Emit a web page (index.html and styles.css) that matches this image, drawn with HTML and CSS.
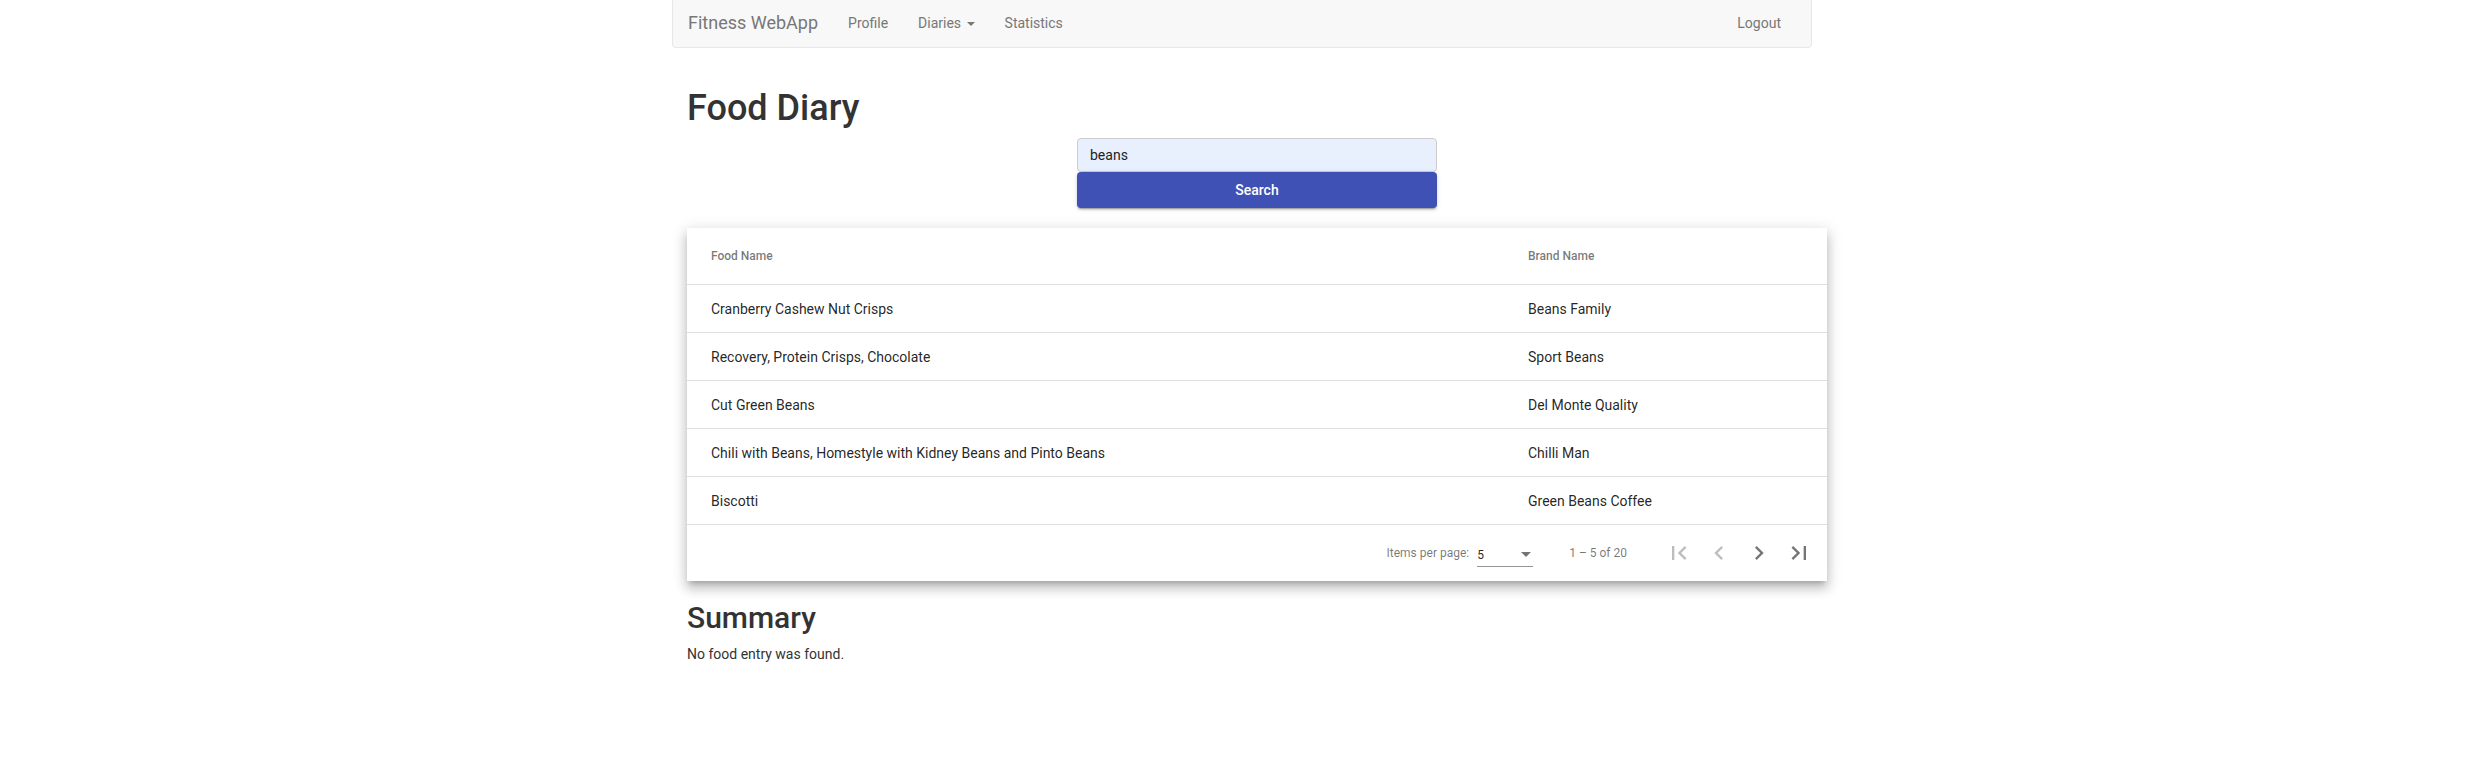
FILE: index.html
```html
<!DOCTYPE html>
<html lang="en">
<head>
<meta charset="utf-8">
<title>Fitness WebApp - Food Diary</title>
<link rel="stylesheet" href="styles.css">
</head>
<body>
<div class="page">
  <nav class="navbar">
    <div class="nav-left">
      <a class="brand" href="#">Fitness WebApp</a>
      <a class="nav-link" href="#">Profile</a>
      <a class="nav-link" href="#">Diaries <span class="caret"></span></a>
      <a class="nav-link" href="#">Statistics</a>
    </div>
    <div class="nav-right">
      <a class="nav-link" href="#">Logout</a>
    </div>
  </nav>

  <main class="content">
    <h1 class="title">Food Diary</h1>
    <form class="search-form">
      <input class="search-input" type="text" value="beans">
      <button class="search-btn" type="button">Search</button>
    </form>

    <div class="card">
      <table class="food-table">
        <colgroup>
          <col class="col-food">
          <col class="col-brand">
        </colgroup>
        <thead>
          <tr><th>Food Name</th><th>Brand Name</th></tr>
        </thead>
        <tbody>
          <tr><td>Cranberry Cashew Nut Crisps</td><td>Beans Family</td></tr>
          <tr><td>Recovery, Protein Crisps, Chocolate</td><td>Sport Beans</td></tr>
          <tr><td>Cut Green Beans</td><td>Del Monte Quality</td></tr>
          <tr><td>Chili with Beans, Homestyle with Kidney Beans and Pinto Beans</td><td>Chilli Man</td></tr>
          <tr><td>Biscotti</td><td>Green Beans Coffee</td></tr>
        </tbody>
      </table>
      <div class="paginator">
        <div class="page-size">
          <span class="page-size-label">Items per page:</span>
          <div class="select">
            <span class="select-value">5</span>
            <span class="select-arrow"></span>
          </div>
        </div>
        <div class="range">1 – 5 of 20</div>
        <button class="pg-btn disabled" type="button" aria-label="First page">
          <svg viewBox="0 0 24 24" width="28" height="28"><path d="M18.41 16.59L13.82 12l4.59-4.59L17 6l-6 6 6 6zM6 6h2v12H6z"/></svg>
        </button>
        <button class="pg-btn disabled" type="button" aria-label="Previous page">
          <svg viewBox="0 0 24 24" width="28" height="28"><path d="M15.41 7.41L14 6l-6 6 6 6 1.41-1.41L10.83 12z"/></svg>
        </button>
        <button class="pg-btn" type="button" aria-label="Next page">
          <svg viewBox="0 0 24 24" width="28" height="28"><path d="M10 6L8.59 7.41 13.17 12l-4.58 4.59L10 18l6-6z"/></svg>
        </button>
        <button class="pg-btn" type="button" aria-label="Last page">
          <svg viewBox="0 0 24 24" width="28" height="28"><path d="M5.59 7.41L10.18 12l-4.59 4.59L7 18l6-6-6-6zM16 6h2v12h-2z"/></svg>
        </button>
      </div>
    </div>

    <h2 class="subtitle">Summary</h2>
    <p class="note">No food entry was found.</p>
  </main>
</div>
</body>
</html>
```

FILE: styles.css
```css
* { box-sizing: border-box; }

html, body {
  margin: 0;
  padding: 0;
  background: #fff;
}

body {
  font-family: Roboto, "Helvetica Neue", Arial, sans-serif;
  font-size: 14px;
  line-height: 20px;
  color: #333;
}

.page {
  width: 1140px;
  margin-left: calc(50% - 568px);
}

/* Navbar */
.navbar {
  display: flex;
  justify-content: space-between;
  align-items: stretch;
  height: 50px;
  margin-top: -2px;
  background: #f8f8f8;
  border: 1px solid #e7e7e7;
  border-radius: 4px;
}

.nav-left, .nav-right {
  display: flex;
  align-items: stretch;
}

.nav-right {
  margin-right: 15px;
}

.brand {
  display: block;
  padding: 14px 15px 16px;
  font-size: 18px;
  line-height: 20px;
  color: #777;
  text-decoration: none;
}

.nav-link {
  display: block;
  padding: 14px 15px 16px;
  font-size: 14px;
  line-height: 20px;
  color: #777;
  text-decoration: none;
}

.caret {
  display: inline-block;
  width: 0;
  height: 0;
  margin-left: 2px;
  vertical-align: middle;
  border-top: 4px solid #777;
  border-right: 4px solid transparent;
  border-left: 4px solid transparent;
}

/* Content */
.content {
  width: 1140px;
  margin-left: 15px;
  padding-top: 41px;
}

.title {
  margin: 0 0 9px;
  font-size: 36px;
  font-weight: 500;
  line-height: 39.6px;
  color: #333;
}

.search-form {
  width: 360px;
  margin: 0 auto;
  display: flex;
  flex-direction: column;
}

.search-input {
  height: 34px;
  padding: 6px 12px;
  font-family: Roboto, Arial, sans-serif;
  font-size: 14px;
  color: #222;
  background: #e8f0fe;
  border: 1px solid #ccc;
  border-radius: 4px;
  outline: none;
}

.search-btn {
  height: 36px;
  border: none;
  border-radius: 4px;
  background: #3f51b5;
  color: #fff;
  font-family: Roboto, Arial, sans-serif;
  font-size: 14px;
  font-weight: 500;
  box-shadow: 0 3px 1px -2px rgba(0,0,0,.2), 0 2px 2px 0 rgba(0,0,0,.14), 0 1px 5px 0 rgba(0,0,0,.12);
}

/* Card / table */
.card {
  margin-top: 20px;
  background: #fff;
  box-shadow: 0 5px 5px -3px rgba(0,0,0,.2), 0 8px 10px 1px rgba(0,0,0,.14), 0 3px 14px 2px rgba(0,0,0,.12);
}

.food-table {
  width: 100%;
  border-collapse: collapse;
  table-layout: fixed;
}

.col-food { width: 841px; }

.food-table th,
.food-table td {
  text-align: left;
  vertical-align: middle;
  padding: 0;
  border-bottom: 1px solid rgba(0,0,0,.12);
}

.food-table th:first-child,
.food-table td:first-child { padding-left: 24px; }

.food-table th:last-child,
.food-table td:last-child { padding-right: 24px; }

.food-table th {
  height: 57px;
  font-size: 12px;
  font-weight: 500;
  color: rgba(0,0,0,.54);
}

.food-table td {
  height: 48px;
  font-size: 14px;
  color: rgba(0,0,0,.87);
}

/* Paginator */
.paginator {
  display: flex;
  align-items: center;
  justify-content: flex-end;
  min-height: 56px;
  padding: 0 8px;
  font-size: 12px;
  color: rgba(0,0,0,.54);
}

.page-size {
  display: flex;
  align-items: center;
  margin-right: 8px;
}

.page-size-label {
  margin: 0 4px;
}

.select {
  width: 56px;
  margin: 6px 4px 0;
  height: 22px;
  display: flex;
  align-items: center;
  justify-content: space-between;
  border-bottom: 1px solid rgba(0,0,0,.42);
  padding-bottom: 2px;
}

.select-value {
  color: rgba(0,0,0,.87);
  font-size: 12px;
}

.select-arrow {
  width: 0;
  height: 0;
  margin-right: 2px;
  border-left: 5px solid transparent;
  border-right: 5px solid transparent;
  border-top: 5px solid rgba(0,0,0,.54);
}

.range {
  margin: 0 32px 0 24px;
}

.pg-btn {
  width: 40px;
  height: 40px;
  padding: 0;
  border: none;
  background: transparent;
  display: flex;
  align-items: center;
  justify-content: center;
}

.pg-btn svg { fill: rgba(0,0,0,.54); }
.pg-btn.disabled svg { fill: rgba(0,0,0,.26); }

/* Summary */
.subtitle {
  margin: 20px 0 10px;
  font-size: 30px;
  font-weight: 500;
  line-height: 33px;
  color: #333;
}

.note {
  margin: 0 0 10px;
  color: #333;
}
```
